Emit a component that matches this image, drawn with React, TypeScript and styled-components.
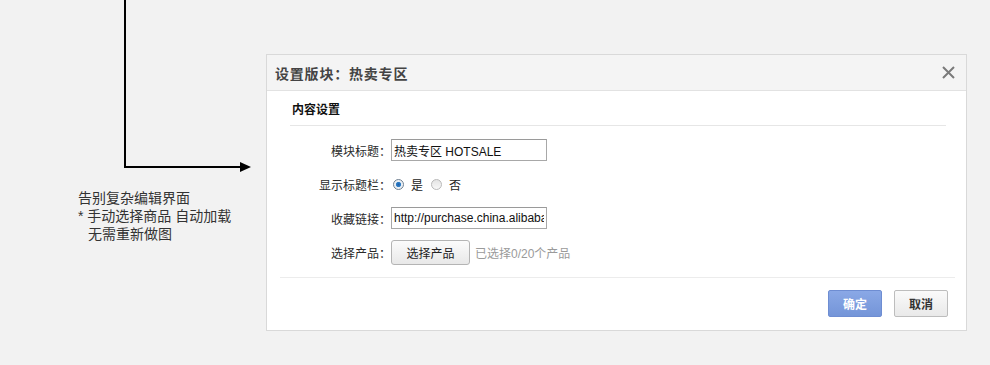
import styled, { createGlobalStyle } from 'styled-components';

const GlobalStyle = createGlobalStyle`
  html, body {
    margin: 0;
    padding: 0;
    background: #f2f2f2;
  }
  body {
    font-family: "Liberation Sans", "Noto Sans CJK SC", sans-serif;
    font-size: 12px;
    color: #333;
  }
`;

const cjk = `"Liberation Sans", "Noto Sans CJK SC", sans-serif`;

const Page = styled.div`
  display: flex;
  align-items: flex-start;
  width: 990px;
  height: 365px;
  overflow: hidden;
`;

const LeftPane = styled.div`
  width: 266px;
  flex: none;
  display: flex;
  flex-direction: column;
`;

const ArrowSvg = styled.svg`
  display: block;
`;

const Note = styled.div`
  margin: 14px 0 0 78px;
  font-family: ${cjk};
  font-size: 14px;
  line-height: 18px;
  color: #333;
`;

const NoteLine = styled.div<{ $indent?: boolean }>`
  padding-left: ${({ $indent }) => ($indent ? '10px' : '0')};
  white-space: nowrap;
`;

const Dialog = styled.div`
  box-sizing: border-box;
  width: 701px;
  height: 277px;
  margin-top: 54px;
  background: #fff;
  border: 1px solid #d9d9d9;
  display: flex;
  flex-direction: column;
`;

const Header = styled.div`
  height: 35px;
  flex: none;
  display: flex;
  align-items: center;
  justify-content: space-between;
  padding: 0 10px 0 8px;
  background: #f4f4f4;
  border-bottom: 1px solid #e2e2e2;
`;

const Title = styled.div`
  font-family: ${cjk};
  font-size: 14px;
  font-weight: bold;
  color: #444;
  letter-spacing: 0.8px;
`;

const CloseButton = styled.button`
  width: 16px;
  height: 16px;
  padding: 0;
  border: 0;
  background: none;
  display: flex;
  align-items: center;
  justify-content: center;
  cursor: pointer;
`;

const Body = styled.div`
  flex: 1;
  display: flex;
  flex-direction: column;
`;

const SectionTitle = styled.div`
  margin: 0 20px 0 23px;
  height: 34px;
  padding-left: 2px;
  display: flex;
  align-items: center;
  border-bottom: 1px solid #e6e6e6;
  font-family: ${cjk};
  font-size: 12px;
  font-weight: bold;
  color: #111;
`;

const Form = styled.div`
  display: flex;
  flex-direction: column;
  gap: 12px;
  margin: 13px 11px 0 13px;
  padding-bottom: 12px;
  border-bottom: 1px solid #ececec;
`;

const Row = styled.div<{ $tall?: boolean }>`
  display: flex;
  align-items: center;
  height: ${({ $tall }) => ($tall ? '25px' : '22px')};
  margin-top: ${({ $tall }) => ($tall ? '-1px' : '0')};
`;

const Label = styled.div`
  width: 111px;
  flex: none;
  text-align: right;
  font-family: ${cjk};
  font-size: 12px;
  color: #2a2a2a;
  white-space: nowrap;
`;

const TextInput = styled.input`
  box-sizing: border-box;
  width: 156px;
  height: 22px;
  margin: 0;
  padding: 0 2px;
  border: 1px solid #a8a8a8;
  border-top-color: #9a9a9a;
  font-family: "Liberation Sans", "Noto Sans CJK SC", sans-serif;
  font-size: 12px;
  color: #111;
  background: #fff;
  outline: none;
`;

const RadioGroup = styled.div`
  display: flex;
  align-items: center;
  gap: 8px;
  padding-left: 2px;
`;

const RadioOption = styled.label`
  display: flex;
  align-items: center;
  gap: 7px;
  font-family: ${cjk};
  font-size: 12px;
  color: #222;
`;

const RadioDot = styled.span<{ $checked?: boolean }>`
  box-sizing: border-box;
  width: 11px;
  height: 11px;
  border-radius: 50%;
  border: 1px solid ${({ $checked }) => ($checked ? '#6f7f90' : '#b9b9b9')};
  background: ${({ $checked }) =>
    $checked
      ? 'radial-gradient(circle, #1f5fa8 0, #2f7fc8 2.2px, #e8eef4 3px, #f6f6f6 100%)'
      : 'linear-gradient(#e4e4e4, #f8f8f8)'};
`;

const PickButton = styled.button`
  box-sizing: border-box;
  width: 79px;
  height: 25px;
  margin: 0;
  border: 1px solid #b4b4b4;
  border-radius: 3px;
  background: linear-gradient(#fbfbfb, #e8e8e8);
  font-family: ${cjk};
  font-size: 12px;
  color: #222;
  cursor: pointer;
`;

const Hint = styled.span`
  margin-left: 5px;
  font-family: ${cjk};
  font-size: 12px;
  color: #9a9a9a;
`;

const Footer = styled.div`
  display: flex;
  justify-content: flex-end;
  gap: 12px;
  padding: 12px 18px 0 0;
`;

const ActionButton = styled.button<{ $primary?: boolean }>`
  box-sizing: border-box;
  width: 54px;
  height: 27px;
  margin: 0;
  border-radius: 2px;
  border: 1px solid ${({ $primary }) => ($primary ? '#6e8dd2' : '#bdbdbd')};
  background: ${({ $primary }) =>
    $primary
      ? 'linear-gradient(#8aa8e6, #7495d8)'
      : 'linear-gradient(#fafafa, #e9e9e9)'};
  color: ${({ $primary }) => ($primary ? '#fff' : '#333')};
  font-family: ${cjk};
  font-size: 12px;
  font-weight: bold;
  cursor: pointer;
`;

export default function App() {
  return (
    <>
      <GlobalStyle />
      <Page>
        <LeftPane>
          <ArrowSvg width="266" height="175" viewBox="0 0 266 175">
            <path d="M125 0 V167 H241" fill="none" stroke="#000" strokeWidth="2" />
            <path d="M240 162 L251 167 L240 172 Z" fill="#000" />
          </ArrowSvg>
          <Note>
            <NoteLine>告别复杂编辑界面</NoteLine>
            <NoteLine>* 手动选择商品 自动加载</NoteLine>
            <NoteLine $indent>无需重新做图</NoteLine>
          </Note>
        </LeftPane>

        <Dialog>
          <Header>
            <Title>设置版块：热卖专区</Title>
            <CloseButton aria-label="关闭">
              <svg width="13" height="13" viewBox="0 0 13 13">
                <path d="M1 1 L12 12 M12 1 L1 12" stroke="#7a7a7a" strokeWidth="2" />
              </svg>
            </CloseButton>
          </Header>

          <Body>
            <SectionTitle>内容设置</SectionTitle>
            <Form>
              <Row>
                <Label>模块标题：</Label>
                <TextInput defaultValue="热卖专区 HOTSALE" />
              </Row>
              <Row>
                <Label>显示标题栏：</Label>
                <RadioGroup>
                  <RadioOption>
                    <RadioDot $checked />是
                  </RadioOption>
                  <RadioOption>
                    <RadioDot />否
                  </RadioOption>
                </RadioGroup>
              </Row>
              <Row>
                <Label>收藏链接：</Label>
                <TextInput defaultValue="http://purchase.china.alibaba.com" />
              </Row>
              <Row $tall>
                <Label>选择产品：</Label>
                <PickButton>选择产品</PickButton>
                <Hint>已选择0/20个产品</Hint>
              </Row>
            </Form>
            <Footer>
              <ActionButton $primary>确定</ActionButton>
              <ActionButton>取消</ActionButton>
            </Footer>
          </Body>
        </Dialog>
      </Page>
    </>
  );
}
